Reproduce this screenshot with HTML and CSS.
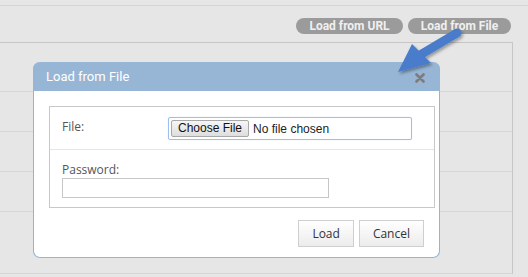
FILE: index.html
```html
<!DOCTYPE html>
<html lang="en">
<head>
  <meta charset="UTF-8" />
  <title>Load from File</title>
  <link rel="stylesheet" href="styles.css">
</head>
<body>

  <div class="topline"></div>

  <div class="toolbar">
    <span class="pill url">Load from URL</span>
    <span class="pill file">Load from File</span>
  </div>

  <!-- Page behind the dialog -->
  <div class="panel">
    <div class="panel-row first"></div>
    <div class="panel-row"></div>
    <div class="panel-row"></div>
    <div class="panel-row"></div>
    <div class="panel-row last"></div>
  </div>

  <!-- Dialog -->
  <div class="dialog">
    <div class="dialog-head">
      <span class="dialog-title">Load from File</span>
      <svg class="close" width="10" height="10" viewBox="0 0 10 10">
        <path d="M1.5 1.5 L8.5 8.5 M8.5 1.5 L1.5 8.5" stroke="#7c7c7c" stroke-width="2.6" stroke-linecap="round"/>
      </svg>
    </div>
    <div class="dialog-body">
      <div class="fields">
        <div class="field-row file-row">
          <label class="label">File:</label>
          <span class="file-input">
            <span class="file-btn">Choose File</span>
            <span class="file-name">No file chosen</span>
          </span>
        </div>
        <div class="field-row pass-row">
          <label class="label">Password:</label>
          <input class="text-input" type="password" />
        </div>
      </div>
      <div class="actions">
        <button class="btn">Load</button>
        <button class="btn">Cancel</button>
      </div>
    </div>
  </div>

  <!-- Pointer arrow -->
  <svg class="arrow" width="80" height="56" viewBox="0 0 80 56">
    <defs>
      <filter id="sh" x="-30%" y="-30%" width="160%" height="160%">
        <feDropShadow dx="1.5" dy="2" stdDeviation="1.8" flood-color="#000" flood-opacity="0.35"/>
      </filter>
    </defs>
    <g filter="url(#sh)" fill="#4a7bca">
      <path d="M67 8 L30 30" stroke="#4a7bca" stroke-width="9" stroke-linecap="round"/>
      <path d="M8 47 L22 19 L41 38 Z"/>
    </g>
  </svg>

</body>
</html>
```

FILE: styles.css
```css
body {
  margin: 0;
  background: #e6e6e6;
  font-family: 'Open Sans', 'Noto Sans', sans-serif;
  height: 277px;
  overflow: hidden;
  position: relative;
}

.topline {
  height: 5px;
  border-bottom: 1px solid #d4d4d4;
}

.toolbar {
  display: flex;
  justify-content: flex-end;
  gap: 5px;
  width: 511px;
  margin-top: 12px;
}

.pill {
  background: #9b9b9b;
  color: #f0f0f0;
  font-family: Roboto, sans-serif;
  font-weight: bold;
  font-size: 12px;
  line-height: 16px;
  text-align: center;
  border-radius: 8px;
}

.pill.url {
  width: 107px;
}

.pill.file {
  width: 103px;
}

.panel {
  margin-top: 8px;
  width: 512px;
  border-top: 1px solid #c6c6c6;
  border-right: 1px solid #c6c6c6;
}

.panel-row {
  height: 39px;
  border-bottom: 1px solid #d6d6d6;
}

.panel-row.first {
  height: 48px;
}

.panel-row.last {
  height: 61px;
}

.dialog {
  position: absolute;
  left: 33px;
  top: 62px;
  width: 407px;
  border-radius: 7px;
  background: white;
  border: 1px solid #95b3d3;
  border-top: none;
  box-sizing: border-box;
}

.dialog-head {
  height: 29px;
  margin: 0 -1px;
  background: #97b5d5;
  border-radius: 7px 7px 0 0;
  display: flex;
  align-items: center;
  justify-content: space-between;
  padding: 0 15px 0 13px;
}

.dialog-title {
  color: white;
  font-family: Roboto, sans-serif;
  font-size: 13px;
}

.close {
  margin-top: 3px;
}

.dialog-body {
  padding: 15px 0 10px 15px;
}

.fields {
  width: 386px;
  box-sizing: border-box;
  border: 1px solid #c8c8c8;
  background: white;
}

.field-row {
  padding-left: 12px;
}

.file-row {
  height: 42px;
  display: flex;
  align-items: center;
  border-bottom: 1px solid #e6e6e6;
}

.file-row .label {
  width: 106px;
  margin-top: -3px;
}

.pass-row {
  height: 57px;
  padding-top: 11px;
  box-sizing: border-box;
}

.label {
  display: block;
  color: #555;
  font-size: 12px;
  line-height: 17px;
}

.file-input {
  display: flex;
  align-items: center;
  width: 244px;
  height: 23px;
  box-sizing: border-box;
  border: 1px solid #9dbff0;
  border-radius: 2px;
  box-shadow: 0 0 1px #b9d2f5;
  padding-left: 2px;
  margin-top: 1px;
}

.file-btn {
  font-family: 'Liberation Sans', Arial, sans-serif;
  font-size: 12px;
  color: #111;
  line-height: 15px;
  padding: 0 6px;
  border: 1px solid #a8a8a8;
  border-radius: 2px;
  background: linear-gradient(#f6f6f6, #dedede);
}

.file-name {
  font-family: 'Liberation Sans', Arial, sans-serif;
  font-size: 12px;
  color: #222;
  margin-left: 4px;
}

.text-input {
  display: block;
  width: 267px;
  height: 20px;
  box-sizing: border-box;
  border: 1px solid #c6c6c6;
  margin: 0;
  padding: 0;
}

.actions {
  display: flex;
  justify-content: flex-end;
  gap: 5px;
  width: 375px;
  margin-top: 12px;
}

.btn {
  font-family: 'Open Sans', 'Noto Sans', sans-serif;
  font-size: 12px;
  color: #333;
  height: 27px;
  padding: 0 13px;
  border: 1px solid #cfcfcf;
  background: linear-gradient(#ffffff, #ececec);
  border-radius: 0;
}

.arrow {
  position: absolute;
  left: 390px;
  top: 25px;
}
```
